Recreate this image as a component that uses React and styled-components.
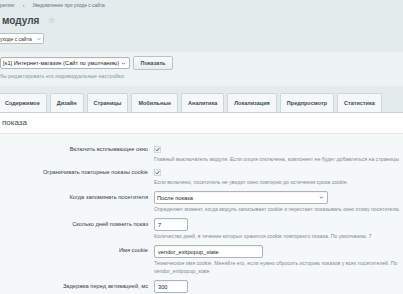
import React from 'react'
import styled, { createGlobalStyle } from 'styled-components'

const GlobalStyle = createGlobalStyle`
    html, body {
        margin: 0;
        padding: 0;
        background: #e3ebed;
        overflow: hidden;
    }
    body {
        font-family: "Liberation Sans", Arial, sans-serif;
        color: #3b4a50;
    }
`

const Page = styled.div`
    width: 403px;
    height: 294px;
    overflow: hidden;
    display: flex;
    flex-direction: column;
`

const Header = styled.div`
    padding-top: 2px;
    display: flex;
    flex-direction: column;
    align-items: flex-start;
`

const Crumbs = styled.div`
    display: flex;
    gap: 8px;
    height: 8px;
    line-height: 8px;
    font-size: 4.9px;
    color: #5f7178;
    white-space: nowrap;
`

const Title = styled.h1`
    margin: 5px 0 0 2px;
    font-size: 10px;
    line-height: 12px;
    font-weight: bold;
    color: #3c494e;
    display: flex;
    align-items: center;
    gap: 9px;
`

const Star = styled.span`
    font-size: 8px;
    font-weight: normal;
    color: #9aa7ab;
`

const SmallSelect = styled.div`
    margin-top: 6px;
    height: 11px;
    width: 44px;
    box-sizing: border-box;
    background: #fff;
    border: 1px solid #b6c1c5;
    border-left: none;
    border-radius: 0 2px 2px 0;
    display: flex;
    align-items: center;
    justify-content: space-between;
    padding: 0 2px 0 0;
    font-size: 5px;
    color: #333;
    white-space: nowrap;
`

const SitePanel = styled.div`
    margin-top: 8px;
    background: #edf2f3;
    padding: 4px 0 6px;
    display: flex;
    flex-direction: column;
`

const SiteRow = styled.div`
    display: flex;
    align-items: center;
    gap: 3px;
`

const Select = styled.div`
    width: ${p => p.$w}px;
    height: ${p => p.$h}px;
    box-sizing: border-box;
    background: #fff;
    border: 1px solid #a9b6ba;
    border-radius: 2px;
    display: flex;
    align-items: center;
    justify-content: space-between;
    padding: 0 3px 0 2px;
    font-size: ${p => p.$fs}px;
    color: #222;
    white-space: nowrap;
    box-shadow: inset 0 1px 1px rgba(0, 0, 0, 0.04);
`

const Button = styled.button`
    height: 14px;
    width: 40px;
    padding: 0;
    border: 1px solid #b9c4c7;
    border-radius: 2px;
    background: linear-gradient(#f8fafa, #e8eeef);
    font-family: inherit;
    font-size: 5.5px;
    font-weight: bold;
    color: #3e4b50;
`

const Hint = styled.div`
    margin-top: 2px;
    line-height: 8px;
    font-size: 5.3px;
    color: #8a989d;
    white-space: nowrap;
`

const TabBar = styled.div`
    padding-top: 7px;
    display: flex;
    gap: 3px;
    margin-left: -2px;
    border-bottom: 1px solid #c7d1d4;
`

const Tab = styled.div`
    height: 19px;
    box-sizing: border-box;
    padding: 0 6px;
    display: flex;
    align-items: center;
    background: #f5f8f8;
    border: 1px solid #cdd7da;
    border-bottom: none;
    border-radius: 2px 2px 0 0;
    font-size: 5.5px;
    font-weight: bold;
    color: #3e4b50;
    white-space: nowrap;
`

const Content = styled.div`
    flex: 1;
    background: #fff;
    display: flex;
    flex-direction: column;
`

const SectionTitle = styled.div`
    padding: 5px 2px;
    line-height: 10px;
    font-size: 8px;
    color: #3c494e;
    border-bottom: 1px solid #e2e9eb;
`

const Form = styled.div`
    flex: 1;
    background: #f5f8f9;
    padding-top: 11px;
    display: flex;
    flex-direction: column;
`

const Row = styled.div`
    display: grid;
    grid-template-columns: 148px 1fr;
    column-gap: 6px;
    padding-bottom: 5px;
`

const Label = styled.div`
    text-align: right;
    font-size: 5.7px;
    line-height: ${p => p.$h}px;
    color: #333f44;
    white-space: nowrap;
`

const Field = styled.div`
    display: flex;
    flex-direction: column;
    align-items: flex-start;
    gap: 1px;
    min-width: 0;
`

const CheckWrap = styled.div`
    height: 9px;
    display: flex;
    align-items: center;
`

const Input = styled.div`
    width: ${p => p.$w}px;
    height: 13px;
    box-sizing: border-box;
    background: #fff;
    border: 1px solid #a9b6ba;
    border-radius: 2px;
    padding: 0 3px;
    display: flex;
    align-items: center;
    font-size: 5.7px;
    color: #222;
    white-space: nowrap;
    box-shadow: inset 0 1px 1px rgba(0, 0, 0, 0.05);
`

const Desc = styled.div`
    font-size: 5.2px;
    line-height: 8px;
    color: #7d8c92;
    white-space: nowrap;
`

function Chevron({ size = 5 }) {
    return (
        <svg width={size} height={size} viewBox="0 0 10 10">
            <path d="M2 3.5 L5 6.5 L8 3.5" fill="none" stroke="#444" strokeWidth="1.4" />
        </svg>
    )
}

function Checkbox() {
    return (
        <svg width="7" height="7" viewBox="0 0 14 14">
            <rect x="0.5" y="0.5" width="13" height="13" rx="2" fill="#eef2f3" stroke="#a3b0b4" />
            <path d="M3.5 7.2 L6 9.8 L10.8 3.8" fill="none" stroke="#4a5a60" strokeWidth="1.8" />
        </svg>
    )
}

const tabs = ['Содержимое', 'Дизайн', 'Страницы', 'Мобильные', 'Аналитика', 'Локализация', 'Предпросмотр', 'Статистика']

export default function App() {
    return (
        <>
        <GlobalStyle />
        <Page>
            <Header>
                <Crumbs>
                    <span>ретинг</span>
                    <span>›</span>
                    <span>Уведомление при уходе с сайта</span>
                </Crumbs>
                <Title>
                    модуля
                    <Star>☆</Star>
                </Title>
                <SmallSelect>
                    <span>уходе с сайта</span>
                    <Chevron size={4} />
                </SmallSelect>
            </Header>

            <SitePanel>
                <SiteRow>
                    <Select $w={130} $h={12} $fs={5.7}>
                        <span>[s1] Интернет-магазин (Сайт по умолчанию)</span>
                        <Chevron size={5} />
                    </Select>
                    <Button>Показать</Button>
                </SiteRow>
                <Hint>бы редактировать его индивидуальные настройки.</Hint>
            </SitePanel>

            <TabBar>
                {tabs.map(t => <Tab key={t}>{t}</Tab>)}
            </TabBar>

            <Content>
                <SectionTitle>показа</SectionTitle>
                <Form>
                    <Row>
                        <Label $h={9}>Включить всплывающее окно</Label>
                        <Field>
                            <CheckWrap><Checkbox /></CheckWrap>
                            <Desc>Главный выключатель модуля. Если опция отключена, компонент не будет добавляться на страницы</Desc>
                        </Field>
                    </Row>
                    <Row>
                        <Label $h={9}>Ограничивать повторные показы cookie</Label>
                        <Field>
                            <CheckWrap><Checkbox /></CheckWrap>
                            <Desc>Если включено, посетитель не увидит окно повторно до истечения срока cookie.</Desc>
                        </Field>
                    </Row>
                    <Row>
                        <Label $h={13}>Когда запоминать посетителя</Label>
                        <Field>
                            <Select $w={174} $h={13} $fs={5.7}>
                                <span>После показа</span>
                                <Chevron size={5} />
                            </Select>
                            <Desc>Определяет момент, когда модуль записывает cookie и перестает показывать окно этому посетителю</Desc>
                        </Field>
                    </Row>
                    <Row>
                        <Label $h={13}>Сколько дней помнить показ</Label>
                        <Field>
                            <Input $w={34}>7</Input>
                            <Desc>Количество дней, в течение которых хранится cookie повторного показа. По умолчанию: 7</Desc>
                        </Field>
                    </Row>
                    <Row>
                        <Label $h={11}>Имя cookie</Label>
                        <Field>
                            <Input $w={109}>vendor_exitpopup_state</Input>
                            <Desc>
                                Техническое имя cookie. Меняйте его, если нужно сбросить историю показов у всех посетителей. По
                                <br />
                                vendor_exitpopup_state
                            </Desc>
                        </Field>
                    </Row>
                    <Row>
                        <Label $h={13}>Задержка перед активацией, мс</Label>
                        <Field>
                            <Input $w={34}>300</Input>
                        </Field>
                    </Row>
                </Form>
            </Content>
        </Page>
        </>
    )
}
